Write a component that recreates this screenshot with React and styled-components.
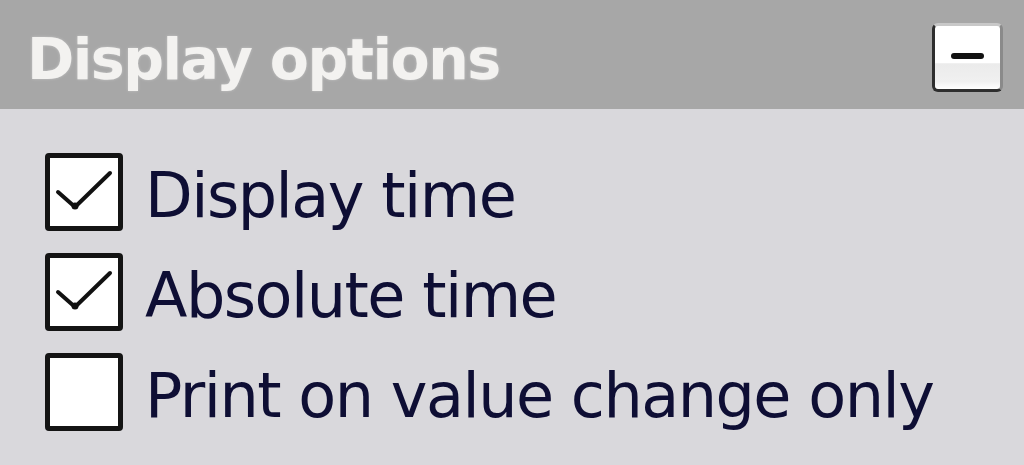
import React, { useState } from 'react';
import styled, { createGlobalStyle } from 'styled-components';

const GlobalStyle = createGlobalStyle`
  html, body {
    margin: 0;
    padding: 0;
    background: #d9d8dc;
  }
  body {
    width: 1024px;
    height: 465px;
    overflow: hidden;
  }
`;

const Panel = styled.div`
  width: 1024px;
  height: 465px;
  background: #d9d8dc;
  font-family: "DejaVu Sans", "Liberation Sans", sans-serif;
`;

const Header = styled.div`
  height: 109px;
  background: #a7a7a7;
  display: flex;
  align-items: flex-start;
  justify-content: space-between;
  padding: 0 21px 0 27px;
  box-sizing: border-box;
`;

const Title = styled.h2`
  margin: 28px 0 0;
  font-size: 57px;
  font-weight: bold;
  color: #f3f2f0;
  letter-spacing: -1.5px;
  line-height: 1.1;
  text-shadow: 0 0 3px rgba(255, 255, 255, 0.35);
`;

const CollapseButton = styled.button`
  width: 71px;
  height: 69px;
  margin-top: 23px;
  padding: 0;
  background: linear-gradient(#ffffff 0%, #ffffff 58%, #ebebeb 60%, #f0f0f0 88%, #ffffff 100%);
  border: 3px solid #2e2e2e;
  border-top-color: #c8c8c8;
  border-right-color: #8a8a8a;
  border-radius: 6px;
  display: flex;
  align-items: center;
  justify-content: center;
  cursor: pointer;
`;

const MinusBar = styled.span`
  display: block;
  width: 33px;
  height: 6px;
  margin-top: -4px;
  border-radius: 4px;
  background: #111;
`;

const Options = styled.div`
  display: flex;
  flex-direction: column;
  gap: 22px;
  padding: 44px 0 0 45px;
`;

const Row = styled.label`
  display: flex;
  align-items: center;
  gap: 22px;
  height: 78px;
  cursor: pointer;
`;

const Box = styled.span`
  width: 78px;
  height: 78px;
  box-sizing: border-box;
  border: 5px solid #141414;
  border-radius: 4px;
  background: #fff;
  display: flex;
  align-items: center;
  justify-content: center;
  flex-shrink: 0;
`;

const Caption = styled.span`
  padding-top: 8px;
  font-size: 62px;
  color: #0e0e34;
  letter-spacing: -1.5px;
  line-height: 1;
`;

const Check = () => (
  <svg width="68" height="68" viewBox="0 0 68 68">
    <path d="M8 34 L25 49 L60 15" fill="none" stroke="#111" strokeWidth="4" strokeLinejoin="round" strokeLinecap="round" />
    <circle cx="25" cy="48" r="3.5" fill="#111" />
  </svg>
);

const Checkbox = ({ label, checked, onToggle }) => (
  <Row onClick={onToggle}>
    <Box>{checked && <Check />}</Box>
    <Caption>{label}</Caption>
  </Row>
);

const App = () => {
  const [opts, setOpts] = useState({ time: true, absolute: true, onChange: false });
  const toggle = (key) => setOpts({ ...opts, [key]: !opts[key] });

  return (
    <Panel>
      <GlobalStyle />
      <Header>
        <Title>Display options</Title>
        <CollapseButton><MinusBar /></CollapseButton>
      </Header>
      <Options>
        <Checkbox label="Display time" checked={opts.time} onToggle={() => toggle('time')} />
        <Checkbox label="Absolute time" checked={opts.absolute} onToggle={() => toggle('absolute')} />
        <Checkbox label="Print on value change only" checked={opts.onChange} onToggle={() => toggle('onChange')} />
      </Options>
    </Panel>
  );
};

export default App;
